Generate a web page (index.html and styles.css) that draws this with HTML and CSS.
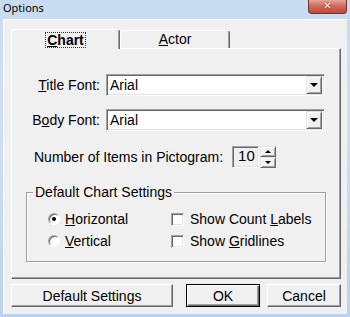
FILE: index.html
```html
<!DOCTYPE html>
<html lang="en">
<head>
    <meta charset="UTF-8">
    <title>Options</title>
    <link rel="stylesheet" href="styles.css">
</head>
<body>
    <div class="window">
        <div class="titlebar">
            <span class="title">Options</span>
            <span class="close">&#x2715;</span>
        </div>
        <div class="client">
            <div class="tabs">
                <div class="tab active"><span class="focus"><u>C</u>hart</span></div>
                <div class="tab"><u>A</u>ctor</div>
            </div>
            <div class="page">
                <div class="row">
                    <span class="lbl"><u>T</u>itle Font:</span>
                    <div class="combo"><span class="val">Arial</span><span class="drop"><i class="tri"></i></span></div>
                </div>
                <div class="row">
                    <span class="lbl">B<u>o</u>dy Font:</span>
                    <div class="combo"><span class="val">Arial</span><span class="drop"><i class="tri"></i></span></div>
                </div>
                <div class="row num">
                    <span>Number of Items in Pictogram:</span>
                    <div class="spin">
                        <span class="edit">10</span>
                        <span class="arrows">
                            <span class="sbtn"><i class="tri up"></i></span>
                            <span class="sbtn"><i class="tri"></i></span>
                        </span>
                    </div>
                </div>
                <fieldset class="group">
                    <legend>Default Chart Settings</legend>
                    <div class="opts">
                        <label class="opt"><span class="radio on"></span><span><u>H</u>orizontal</span></label>
                        <label class="opt"><span class="check"></span><span>Show Count <u>L</u>abels</span></label>
                        <label class="opt"><span class="radio"></span><span><u>V</u>ertical</span></label>
                        <label class="opt"><span class="check"></span><span>Show <u>G</u>ridlines</span></label>
                    </div>
                </fieldset>
            </div>
            <div class="buttons">
                <button class="btn wide">Default Settings</button>
                <button class="btn def">OK</button>
                <button class="btn">Cancel</button>
            </div>
        </div>
    </div>
</body>
</html>
```

FILE: styles.css
```css
body{
    margin: 0;
    background-color: #c4d8ee;
}

.window{
    width: 350px;
    height: 317px;
    background: linear-gradient(#c8dcf1, #cfe0f2 40%, #bcd2ea);
    font-family: "Liberation Sans", Arial, sans-serif;
    font-size: 14px;
    color: #000;
}

.titlebar{
    height: 19px;
    display: flex;
    justify-content: space-between;
    align-items: flex-start;
}

.title{
    font-family: "Noto Sans", sans-serif;
    font-size: 11px;
    line-height: 16px;
    margin-left: 3px;
    color: #000;
}

.close{
    width: 37px;
    height: 13px;
    margin-right: 3px;
    border: 1px solid #7a2f2a;
    border-top: none;
    border-radius: 0 0 4px 4px;
    background: linear-gradient(#e6a89c, #d06a5a 45%, #c14a38);
    color: #fff;
    font-family: "DejaVu Sans", sans-serif;
    font-size: 10px;
    font-weight: bold;
    line-height: 12px;
    text-align: center;
    text-shadow: 0 0 2px #5a1a12;
}

.client{
    margin: 0 3px;
    height: 295px;
    box-sizing: border-box;
    padding: 9px 6px 0 7px;
    background-color: #f0f0f0;
    border-top: 1px solid #fff;
    border-left: 1px solid #fff;
}

.tabs{
    display: flex;
    align-items: flex-end;
    height: 19px;
}

.tab{
    box-sizing: border-box;
    height: 18px;
    width: 110px;
    text-align: center;
    line-height: 16px;
    background-color: #f0f0f0;
    border-top: 1px solid #fff;
    border-left: 1px solid #fff;
    border-right: 1px solid #696969;
    box-shadow: inset -1px 0 0 #a0a0a0;
    border-radius: 3px 3px 0 0;
}

.tab.active{
    width: 109px;
    height: 20px;
    margin-bottom: -1px;
    position: relative;
    z-index: 1;
    font-weight: bold;
}

.focus{
    display: inline-block;
    padding: 0 1px;
    line-height: 14px;
    margin-top: 2px;
    border: 1px dotted #333;
}

.page{
    width: 330px;
    height: 231px;
    box-sizing: border-box;
    padding: 25px 14px 0 14px;
    border-top: 1px solid #fff;
    border-left: 1px solid #fff;
    border-right: 1px solid #696969;
    border-bottom: 1px solid #696969;
    box-shadow: inset -1px -1px 0 #a0a0a0;
    display: flex;
    flex-direction: column;
}

.row{
    display: flex;
    align-items: center;
    margin-bottom: 13px;
}

.lbl{
    width: 74px;
    text-align: right;
    margin-right: 6px;
}

.combo{
    width: 219px;
    height: 22px;
    box-sizing: border-box;
    display: flex;
    align-items: center;
    background-color: #fff;
    border: 1px solid;
    border-color: #a0a0a0 #fff #fff #a0a0a0;
    box-shadow: inset 1px 1px 0 #696969, inset -1px -1px 0 #e3e3e3;
    padding: 2px;
}

.val{
    flex: 1;
    padding-left: 1px;
}

.drop, .sbtn{
    box-sizing: border-box;
    display: flex;
    align-items: center;
    justify-content: center;
    background-color: #f0f0f0;
    border: 1px solid;
    border-color: #e3e3e3 #696969 #696969 #e3e3e3;
    box-shadow: inset 1px 1px 0 #fff, inset -1px -1px 0 #a0a0a0;
}

.drop{
    width: 16px;
    height: 18px;
}

.tri{
    width: 0;
    height: 0;
    border-left: 4px solid transparent;
    border-right: 4px solid transparent;
    border-top: 4px solid #000;
}

.tri.up{
    border-top: none;
    border-bottom: 4px solid #000;
}

.num{
    padding-left: 8px;
    margin-top: 2px;
    margin-bottom: 16px;
}

.spin{
    display: flex;
    margin-left: 9px;
}

.edit{
    width: 27px;
    height: 22px;
    box-sizing: border-box;
    padding-left: 5px;
    line-height: 18px;
    font-size: 15px;
    background-color: #f0f0f0;
    border: 1px solid;
    border-color: #a0a0a0 #fff #fff #a0a0a0;
    box-shadow: inset 1px 1px 0 #696969, inset -1px -1px 0 #e3e3e3;
}

.arrows{
    display: flex;
    flex-direction: column;
    width: 16px;
    margin-left: 1px;
}

.sbtn{
    height: 11px;
}

.sbtn .tri{
    border-left-width: 3px;
    border-right-width: 3px;
    border-top-width: 3px;
}

.sbtn .tri.up{
    border-bottom-width: 3px;
}

.group{
    margin: 0;
    padding: 8px 10px 9px 6px;
    border: 1px solid #a0a0a0;
    box-shadow: 1px 1px 0 #fff, inset 1px 1px 0 #fff;
}

.group legend{
    padding: 0 2px;
    margin-left: 0;
    line-height: 16px;
}

.opts{
    display: grid;
    grid-template-columns: 123px auto;
    grid-auto-rows: 22px;
    padding-left: 15px;
}

.opt{
    display: flex;
    align-items: center;
}

.radio{
    width: 12px;
    height: 12px;
    box-sizing: border-box;
    border-radius: 50%;
    background-color: #fff;
    border: 1px solid;
    border-color: #a0a0a0 #fff #fff #a0a0a0;
    box-shadow: inset 1px 1px 0 #696969;
    margin-right: 5px;
    display: flex;
    align-items: center;
    justify-content: center;
}

.radio.on::after{
    content: "";
    width: 4px;
    height: 4px;
    border-radius: 50%;
    background-color: #000;
}

.check{
    width: 13px;
    height: 13px;
    box-sizing: border-box;
    background-color: #fff;
    border: 1px solid;
    border-color: #a0a0a0 #fff #fff #a0a0a0;
    box-shadow: inset 1px 1px 0 #696969, inset -1px -1px 0 #e3e3e3;
    margin-right: 6px;
}

.buttons{
    display: flex;
    margin-top: 5px;
    width: 330px;
}

.btn{
    height: 23px;
    width: 74px;
    box-sizing: border-box;
    padding: 0;
    font-family: "Liberation Sans", Arial, sans-serif;
    font-size: 14px;
    color: #000;
    background-color: #f0f0f0;
    border: 1px solid;
    border-color: #fff #696969 #696969 #fff;
    box-shadow: inset -1px -1px 0 #a0a0a0;
    margin-left: 7px;
}

.btn.wide{
    width: 162px;
    margin-left: 0;
}

.btn.def{
    margin-left: 13px;
    border: 1px solid #000;
    box-shadow: inset 1px 1px 0 #fff, inset -1px -1px 0 #696969, inset -2px -2px 0 #a0a0a0;
}
```
